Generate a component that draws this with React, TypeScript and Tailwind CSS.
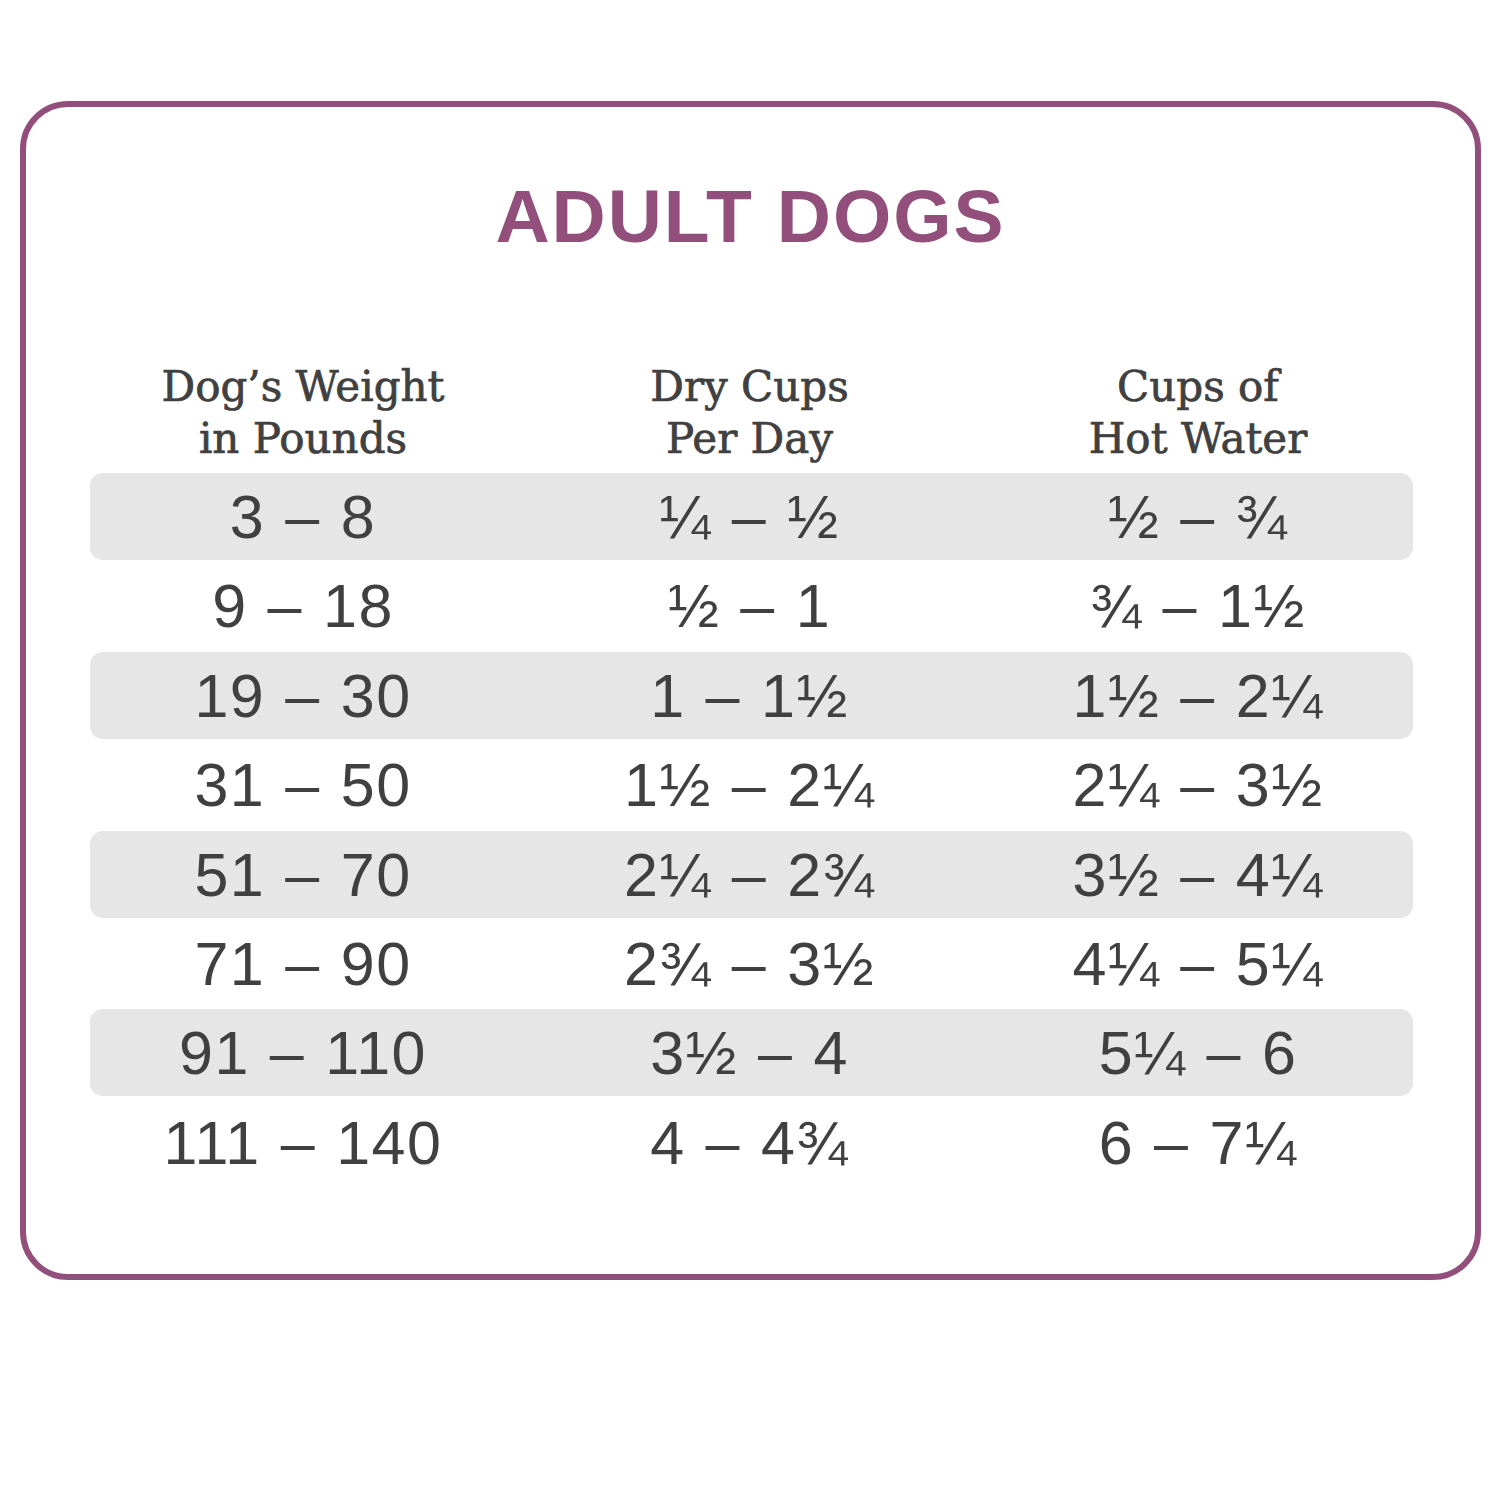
const rows = [
  ["3 – 8", "¼ – ½", "½ – ¾"],
  ["9 – 18", "½ – 1", "¾ – 1½"],
  ["19 – 30", "1 – 1½", "1½ – 2¼"],
  ["31 – 50", "1½ – 2¼", "2¼ – 3½"],
  ["51 – 70", "2¼ – 2¾", "3½ – 4¼"],
  ["71 – 90", "2¾ – 3½", "4¼ – 5¼"],
  ["91 – 110", "3½ – 4", "5¼ – 6"],
  ["111 – 140", "4 – 4¾", "6 – 7¼"],
];

const headers = [
  ["Dog’s Weight", "in Pounds"],
  ["Dry Cups", "Per Day"],
  ["Cups of", "Hot Water"],
];

function Range({ text }: { text: string }) {
  const [a, b] = text.split(" – ");
  return (
    <div className="flex justify-center items-center pt-[2px] tracking-[1.5px]">
      <span>{a}</span>
      <span className="mx-[20px]">–</span>
      <span>{b}</span>
    </div>
  );
}

export default function App() {
  return (
    <div className="w-[1500px] h-[1500px] bg-white pt-[101px] pl-[20px]">
      {/* Card */}
      <div className="w-[1461px] h-[1179px] border-[6px] border-[#934f7b] rounded-[48px] pt-[72px]">
        <h1
          className="text-center text-[75px] leading-none font-bold text-[#934f7b] tracking-[2px]"
          style={{ fontFamily: '"Liberation Sans", Arial, sans-serif' }}
        >
          ADULT DOGS
        </h1>

        <div className="ml-[64px] w-[1323px] mt-[107px]">
          {/* Header */}
          <div
            className="grid grid-cols-[426px_1fr_430px] text-[42px] leading-[52px] text-[#404040] text-center [-webkit-text-stroke:0.7px_#404040]"
            style={{ fontFamily: '"DejaVu Serif", serif' }}
          >
            {headers.map((h, i) => (
              <div key={i}>
                <div>{h[0]}</div>
                <div>{h[1]}</div>
              </div>
            ))}
          </div>

          {/* Rows */}
          <div
            className="mt-[8px] flex flex-col gap-[2.4px] text-[61px] leading-none text-[#404040]"
            style={{ fontFamily: '"Liberation Sans", Arial, sans-serif' }}
          >
            {rows.map((r, i) => (
              <div
                key={i}
                className={
                  "grid grid-cols-[426px_1fr_430px] h-[87px] items-center rounded-[13px] " +
                  (i % 2 === 0 ? "bg-[#e6e6e6]" : "bg-white")
                }
              >
                {r.map((c, j) => (
                  <Range key={j} text={c} />
                ))}
              </div>
            ))}
          </div>
        </div>
      </div>
    </div>
  );
}
